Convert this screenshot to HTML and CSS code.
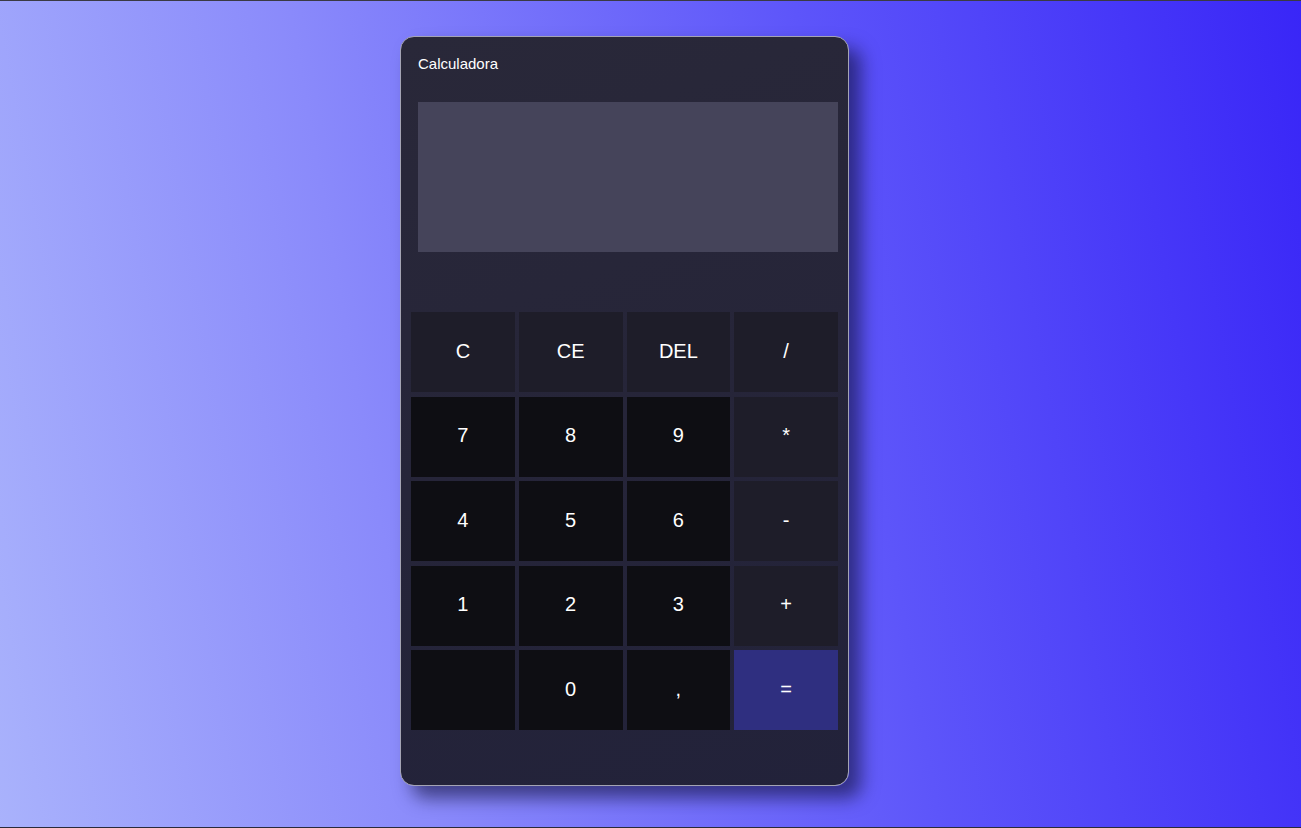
FILE: index.html
```html
<!DOCTYPE html>
<html lang="es">
<head>
<meta charset="utf-8">
<title>Calculadora</title>
<link rel="stylesheet" href="styles.css">
</head>
<body>
<main class="stage">
  <section class="calc">
    <header class="calc-title">Calculadora</header>
    <div class="display"></div>
    <div class="keys">
      <button class="key op">C</button>
      <button class="key op">CE</button>
      <button class="key op">DEL</button>
      <button class="key op">/</button>
      <button class="key num">7</button>
      <button class="key num">8</button>
      <button class="key num">9</button>
      <button class="key op">*</button>
      <button class="key num">4</button>
      <button class="key num">5</button>
      <button class="key num">6</button>
      <button class="key op">-</button>
      <button class="key num">1</button>
      <button class="key num">2</button>
      <button class="key num">3</button>
      <button class="key op">+</button>
      <button class="key num"></button>
      <button class="key num">0</button>
      <button class="key num">,</button>
      <button class="key eq">=</button>
    </div>
  </section>
</main>
</body>
</html>
```
FILE: styles.css
```css
* { box-sizing: border-box; }
html, body { margin: 0; padding: 0; }
body {
  height: 828px;
  overflow: hidden;
  font-family: "Liberation Sans", Arial, sans-serif;
  background: linear-gradient(80deg, #a9b2fc 0%, #8a8afb 30%, #5d55fa 65%, #3926f7 100%);
  border-top: 1px solid #3a3a44;
  border-bottom: 1px solid #2a2a3a;
}
.stage {
  display: flex;
  justify-content: flex-start;
  padding: 35px 0 0 400px;
}
.calc {
  width: 449px;
  height: 750px;
  border: 1px solid #a4a4b4;
  border-radius: 14px;
  background: linear-gradient(160deg, #292839 0%, #262539 50%, #22223a 100%);
  box-shadow: 12px 12px 18px rgba(15, 15, 55, 0.6);
  padding: 0 10px;
  display: flex;
  flex-direction: column;
}
.calc-title {
  color: #ffffff;
  font-size: 15px;
  line-height: 17px;
  padding: 18px 0 0 7px;
  height: 65px;
}
.display {
  margin-left: 7px;
  width: 420px;
  height: 150px;
  background: #45445a;
}
.keys {
  margin-top: 60px;
  display: grid;
  grid-template-columns: repeat(4, 1fr);
  grid-auto-rows: 80px;
  column-gap: 4px;
  row-gap: 4.5px;
}
.key {
  border: none;
  margin: 0;
  padding: 0 0 2px 0;
  color: #ffffff;
  font-family: "Liberation Sans", Arial, sans-serif;
  font-size: 20px;
  cursor: pointer;
}
.key.op { background: #1e1d29; }
.key.num { background: #0e0e13; }
.key.eq { background: #2f2f80; }
```
